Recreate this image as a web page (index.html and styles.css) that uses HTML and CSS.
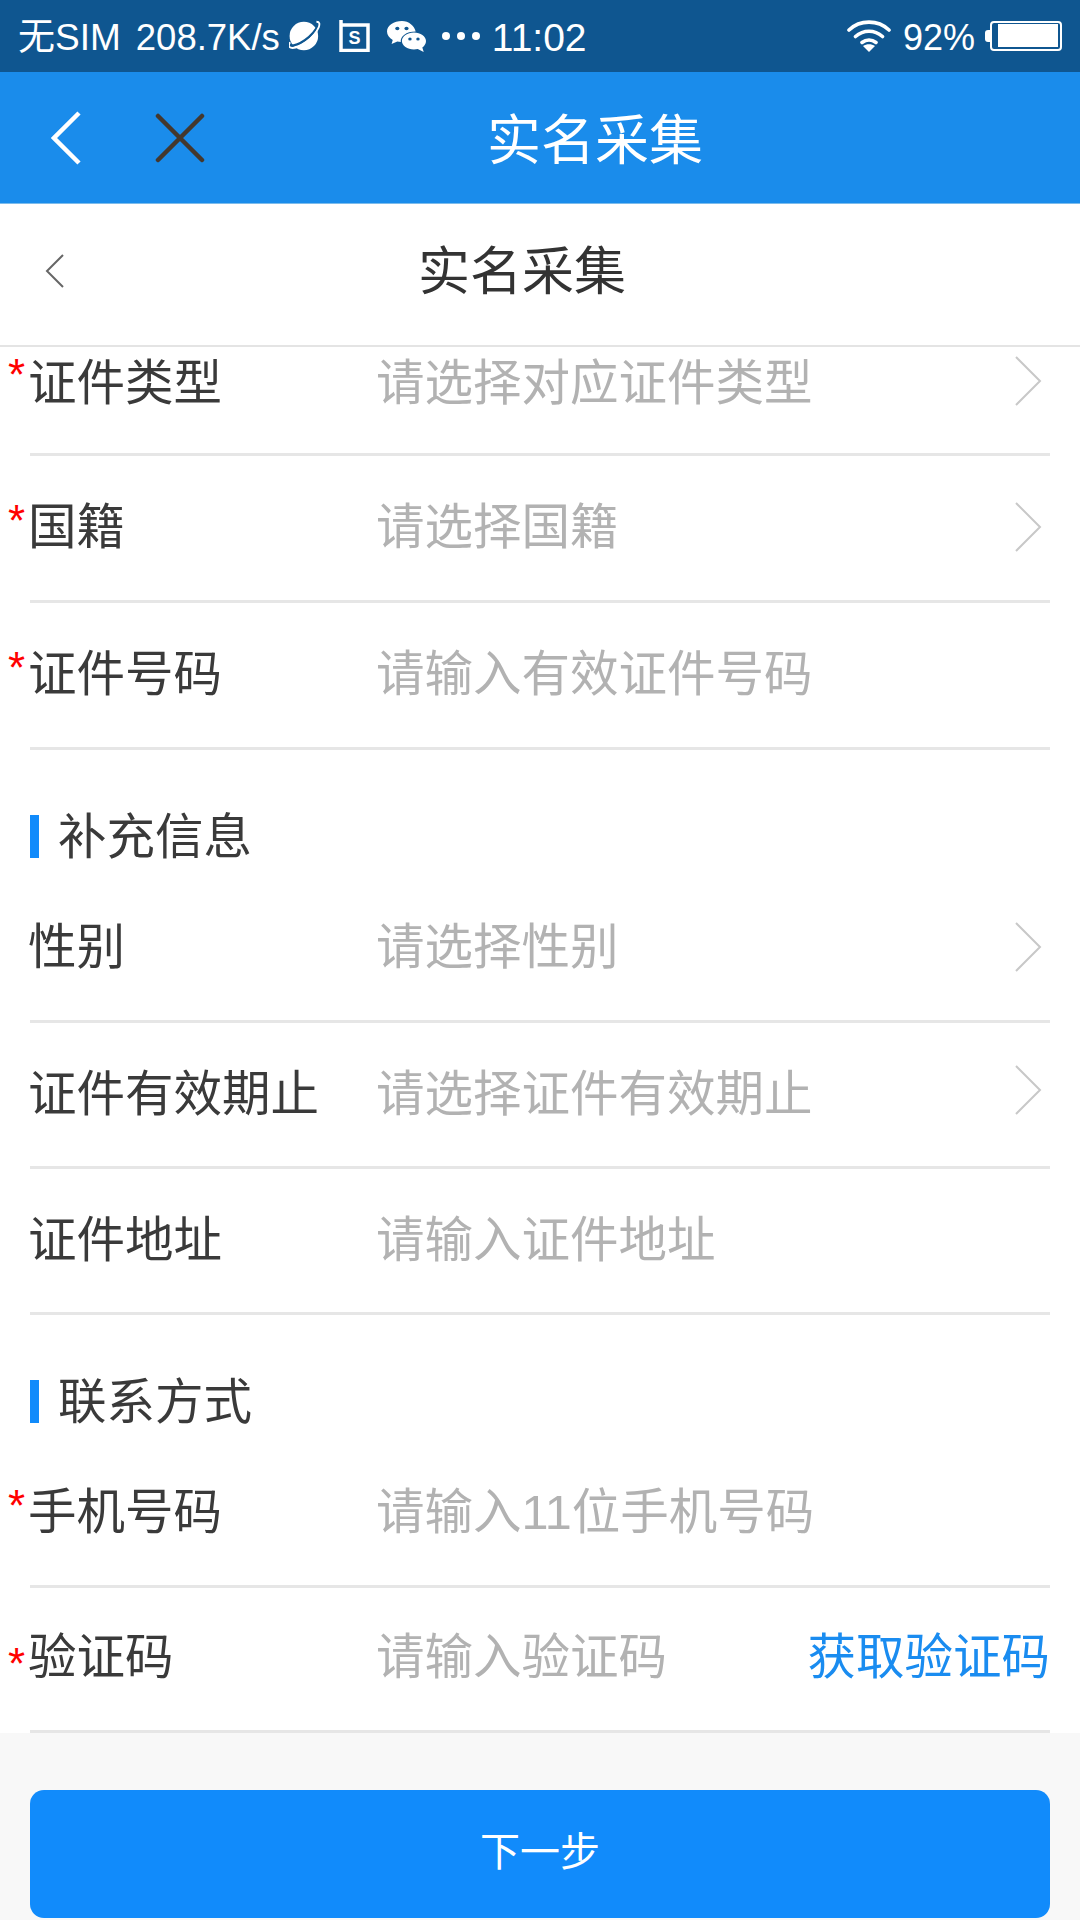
FILE: index.html
```html
<!DOCTYPE html>
<html lang="zh-CN">
<head>
  <meta charset="UTF-8">
  <meta name="viewport" content="width=device-width, initial-scale=1.0">
  <title>实名采集</title>
  <link rel="stylesheet" href="styles.css">
</head>
<body>
  <!-- Status bar -->
  <div class="status-bar">
    <span class="status-text carrier">无SIM</span>
    <span class="status-text speed">208.7K/s</span>
    <svg class="status-icon planet" width="32" height="32" viewBox="0 1 28 28">
      <circle cx="13" cy="15" r="12.5" fill="#fff"/>
      <path d="M0 23.500C8 24 20 17 27 3.500" fill="none" stroke="#0f5690" stroke-width="2"/>
      <path d="M1 20.500c-2 3-1 5 2 5 7 0 19-9 23-18 1-3 1-5-2-5" fill="none" stroke="#fff" stroke-width="1.600"/>
    </svg>
    <svg class="status-icon sim" width="31" height="32" viewBox="0 0 31 32">
      <path d="M2 0v30.500h27V5H2" fill="none" stroke="#fff" stroke-width="3.500"/>
      <text x="15.500" y="24" text-anchor="middle" class="sim-letter">S</text>
    </svg>
    <svg class="status-icon wechat" width="39" height="33" viewBox="0 0 34 33" preserveAspectRatio="none">
      <path d="M13 1C6 1 0 5.500 0 11.500c0 3.500 2 6.500 5 8.500l-1 4 5-2.500c1 .3 2 .4 3 .5-.5-5.500 4.500-10.500 13-10.500C24 6 19 1 13 1z" fill="#fff"/>
      <path d="M23.500 12.500c-5.700 0-10.500 3.700-10.500 8.500s4.800 8.500 10.500 8.500c1.200 0 2.300-.2 3.300-.5L32 32l-1.200-4.500c2-1.600 3.200-3.900 3.200-6.500 0-4.800-4.800-8.500-10.500-8.500z" fill="#fff"/>
      <circle cx="9" cy="8.500" r="1.800" fill="#0f5690"/>
      <circle cx="17" cy="8.500" r="1.800" fill="#0f5690"/>
      <circle cx="20" cy="19" r="1.500" fill="#0f5690"/>
      <circle cx="27" cy="19" r="1.500" fill="#0f5690"/>
    </svg>
    <div class="status-dots"><i></i><i></i><i></i></div>
    <span class="status-text clock">11:02</span>
    <div class="status-right">
      <svg class="status-icon" width="44" height="32" viewBox="0 0 44 32">
        <path d="M2 10C13-.5 31-.5 42 10M8.500 16.500c8-7 19-7 27 0M15 22.500c4.200-3.200 9.800-3.200 14 0" fill="none" stroke="#fff" stroke-width="3.600" stroke-linecap="round"/>
        <path d="M22 32l-6-6c3.500-2.400 8.500-2.400 12 0z" fill="#fff"/>
      </svg>
      <span class="status-text percent">92%</span>
      <div class="battery-nub"></div>
      <div class="battery"><div class="battery-fill"></div></div>
    </div>
  </div>

  <!-- App header -->
  <div class="app-header">
    <svg class="header-back" width="30" height="54" viewBox="0 0 30 54">
      <path d="M28 2L3 27l25 25" fill="none" stroke="#fff" stroke-width="4.500"/>
    </svg>
    <svg class="header-close" width="50" height="50" viewBox="0 0 50 50">
      <path d="M3 3l44 44M47 3L3 47" fill="none" stroke="#44382e" stroke-width="4.500" stroke-linecap="round"/>
    </svg>
    <h1 class="app-title">实名采集</h1>
  </div>

  <!-- Page header -->
  <div class="page-header">
    <svg class="page-back" width="20" height="34" viewBox="0 0 20 34">
      <path d="M18 1L2 17l16 16" fill="none" stroke="#666" stroke-width="2"/>
    </svg>
    <h2 class="page-title">实名采集</h2>
  </div>

  <div class="form">
    <div class="row row-cut">
      <span class="star">*</span>
      <span class="row-label">证件类型</span>
      <span class="row-value">请选择对应证件类型</span>
      <svg class="chevron" width="28" height="50" viewBox="0 0 28 50"><path d="M2 1l24 24L2 49" fill="none" stroke="#c8c8c8" stroke-width="2"/></svg>
    </div>
    <div class="row">
      <span class="star">*</span>
      <span class="row-label">国籍</span>
      <span class="row-value">请选择国籍</span>
      <svg class="chevron" width="28" height="50" viewBox="0 0 28 50"><path d="M2 1l24 24L2 49" fill="none" stroke="#c8c8c8" stroke-width="2"/></svg>
    </div>
    <div class="row">
      <span class="star">*</span>
      <span class="row-label">证件号码</span>
      <span class="row-value">请输入有效证件号码</span>
    </div>

    <div class="section-title"><i class="section-mark"></i><span>补充信息</span></div>
    <div class="row">
      <span class="row-label">性别</span>
      <span class="row-value">请选择性别</span>
      <svg class="chevron" width="28" height="50" viewBox="0 0 28 50"><path d="M2 1l24 24L2 49" fill="none" stroke="#c8c8c8" stroke-width="2"/></svg>
    </div>
    <div class="row row-short">
      <span class="row-label">证件有效期止</span>
      <span class="row-value">请选择证件有效期止</span>
      <svg class="chevron" width="28" height="50" viewBox="0 0 28 50"><path d="M2 1l24 24L2 49" fill="none" stroke="#c8c8c8" stroke-width="2"/></svg>
    </div>
    <div class="row row-short">
      <span class="row-label">证件地址</span>
      <span class="row-value">请输入证件地址</span>
    </div>

    <div class="section-title"><i class="section-mark"></i><span>联系方式</span></div>
    <div class="row">
      <span class="star">*</span>
      <span class="row-label">手机号码</span>
      <span class="row-value">请输入11位手机号码</span>
    </div>
    <div class="row row-short row-last">
      <span class="star star-low">*</span>
      <span class="row-label">验证码</span>
      <span class="row-value">请输入验证码</span>
      <span class="get-code">获取验证码</span>
    </div>
  </div>

  <div class="footer">
    <button class="next-btn" type="button">下一步</button>
  </div>
</body>
</html>
```

FILE: styles.css
```css
* {
  box-sizing: border-box;
}

html, body {
  margin: 0;
  padding: 0;
}

body {
  width: 1080px;
  height: 1920px;
  overflow: hidden;
  background-color: #f8f8f8;
  color: #333;
  font-family: "Liberation Sans", "Noto Sans CJK SC", sans-serif;
}

.status-bar {
  display: flex;
  align-items: center;
  height: 72px;
  padding-left: 18px;
  background-color: #0f5690;
  color: #fff;
}

.status-text {
  margin-top: 3px;
  font-size: 37px;
  line-height: 69px;
  white-space: nowrap;
}

.speed {
  margin-left: 15px;
  font-size: 36.500px;
}

.status-icon {
  display: block;
  flex: none;
}

.planet {
  margin-left: 9px;
}

.sim {
  margin-left: 18px;
}

.wechat {
  margin-left: 17px;
}

.sim-letter {
  font-size: 18px;
  font-weight: bold;
  fill: #fff;
}

.status-dots {
  display: flex;
  gap: 7px;
  margin-left: 16px;
}

.status-dots i {
  width: 8px;
  height: 8px;
  border-radius: 50%;
  background-color: #fff;
}

.clock {
  margin-left: 12px;
  font-size: 39px;
}

.status-right {
  display: flex;
  align-items: center;
  margin-left: auto;
  padding-right: 18px;
}

.percent {
  margin-left: 12px;
  font-size: 36px;
}

.battery-nub {
  width: 5px;
  height: 12px;
  margin-left: 10px;
  border-radius: 3px 0 0 3px;
  background-color: #fff;
}

.battery {
  width: 72px;
  height: 30px;
  padding: 1px 2px 2px 6px;
  border: 2px solid #fff;
  border-radius: 4px;
}

.battery-fill {
  height: 100%;
  background-color: #fff;
}

.app-header {
  display: flex;
  align-items: center;
  height: 132px;
  padding-left: 51px;
  background-color: #1a8ceb;
  border-bottom: 1px solid #7cbcec;
}

.header-close {
  margin-left: 74px;
}

.app-title {
  margin: 0 0 2px 282px;
  font-size: 54px;
  font-weight: normal;
  color: #fff;
}

.page-header {
  display: flex;
  align-items: center;
  height: 143px;
  padding-left: 45px;
  background-color: #fff;
  border-bottom: 2px solid #e4e4e4;
}

.page-back {
  margin-bottom: 7px;
}

.page-title {
  margin: 0 0 14px 353px;
  font-size: 52px;
  font-weight: normal;
  color: #333;
}

.form {
  padding: 0 30px;
  background-color: #fff;
}

.row {
  position: relative;
  display: flex;
  align-items: center;
  height: 147px;
  border-bottom: 3px solid #e6e6e6;
  font-size: 48.500px;
}

.row-short {
  height: 146px;
}

.row-cut {
  height: 109px;
  padding-bottom: 36px;
}

.row-cut .row-label,
.row-cut .row-value {
  margin-bottom: 6px;
}

.row-last {
  height: 145px;
}

.row-last .row-label,
.row-last .row-value,
.row-last .get-code {
  margin-bottom: 12px;
}

.star {
  position: absolute;
  left: -22px;
  top: 41px;
  font-size: 44px;
  line-height: 48px;
  color: #f00;
}

.row-cut .star {
  top: 4px;
}

.star-low {
  top: 52px;
}

.row-label {
  flex: none;
  width: 348px;
  margin: 0 0 10px -2px;
  color: #3a3a3a;
}

.row-value {
  margin-bottom: 10px;
  color: #b2b2b2;
  white-space: nowrap;
}

.chevron {
  flex: none;
  margin-left: auto;
  margin-right: 8px;
  margin-bottom: 2px;
}

.row-short .chevron {
  margin-bottom: 10px;
}

.get-code {
  margin: 0 0 10px auto;
  color: #1a8cf0;
}

.section-title {
  display: flex;
  align-items: center;
  height: 126px;
  padding: 50px 0 4px;
  font-size: 48.500px;
  color: #3a3a3a;
}

.section-title span {
  margin-bottom: 6px;
}

.section-mark {
  width: 9px;
  height: 43px;
  margin-right: 19px;
  background-color: #118bfb;
}

.footer {
  padding: 57px 30px 0;
}

.next-btn {
  display: block;
  width: 100%;
  height: 128px;
  padding-bottom: 12px;
  border: none;
  border-radius: 14px;
  background-color: #118bfb;
  color: #fff;
  font-family: inherit;
  font-size: 40px;
}
```
